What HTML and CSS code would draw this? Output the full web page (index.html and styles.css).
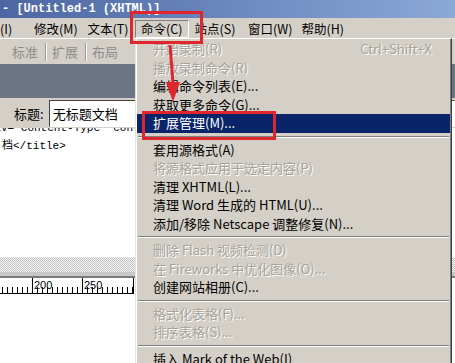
FILE: index.html
```html
<!DOCTYPE html>
<html lang="zh-CN">
<head>
  <meta charset="UTF-8" />
  <title>命令菜单</title>
  <link rel="stylesheet" href="styles.css">
</head>
<body>

  <div class="titlebar">- [Untitled-1 (XHTML)]</div>

  <div class="menubar">
    <span class="mitem first">(I)</span>
    <span class="mitem">修改(M)</span>
    <span class="mitem">文本(T)</span>
    <span class="mitem open">命令(C)</span>
    <span class="mitem">站点(S)</span>
    <span class="mitem">窗口(W)</span>
    <span class="mitem">帮助(H)</span>
  </div>

  <div class="toolbar">
    <span class="tab">标准</span>
    <span class="sep"></span>
    <span class="tab">扩展</span>
    <span class="sep"></span>
    <span class="tab">布局</span>
  </div>

  <div class="darkband"></div>

  <div class="docbar">
    <label for="docTitle">标题:</label>
    <div class="titleinput" id="docTitle">无标题文档</div>
  </div>

  <div class="code">
    <div class="code-lines">
      <div class="line l1">&lt;meta http-equiv="Content-Type" content="text/html; charset=utf-8" /&gt;</div>
      <div class="line">档&lt;/title&gt;</div>
    </div>
  </div>

  <div class="stipple"></div>
  <div class="rulerline"></div>
  <div class="ruler">
    <span class="rcell">200</span>
    <span class="rcell">250</span>
  </div>

  <!-- Commands dropdown, open over the document -->
  <div class="dropdown">
    <div class="item off"><span>开始录制(R)</span><span>Ctrl+Shift+X</span></div>
    <div class="item off">播放录制命令(R)</div>
    <div class="item">编辑命令列表(E)...</div>
    <div class="item">获取更多命令(G)...</div>
    <div class="item active">扩展管理(M)...</div>
    <div class="sep-line"></div>
    <div class="item">套用源格式(A)</div>
    <div class="item off">将源格式应用于选定内容(P)</div>
    <div class="item">清理 XHTML(L)...</div>
    <div class="item">清理 Word 生成的 HTML(U)...</div>
    <div class="item">添加/移除 Netscape 调整修复(N)...</div>
    <div class="sep-line"></div>
    <div class="item off">删除 Flash 视频检测(D)</div>
    <div class="item off">在 Fireworks 中优化图像(O)...</div>
    <div class="item">创建网站相册(C)...</div>
    <div class="sep-line"></div>
    <div class="item off">格式化表格(F)...</div>
    <div class="item off">排序表格(S)...</div>
    <div class="sep-line"></div>
    <div class="item">插入 Mark of the Web(I)</div>
  </div>

  <!-- Red annotation marks -->
  <div class="mark-box box1"></div>
  <div class="mark-box box2"></div>
  <svg class="arrow" width="30" height="66" viewBox="0 0 30 66">
    <line x1="10" y1="5" x2="13" y2="44" stroke="#e1252d" stroke-width="3" />
    <polygon points="6,42 20,42 13,62" fill="#e1252d" />
  </svg>

</body>
</html>
```

FILE: styles.css
```css
body {
  margin: 0;
  width: 455px;
  height: 363px;
  overflow: hidden;
  position: relative;
  background: #fff;
  font-family: "Noto Sans CJK SC", sans-serif;
  font-size: 13px;
  color: #000;
}

.titlebar {
  height: 18px;
  padding-left: 2px;
  background: linear-gradient(to right, #4c66a2, #8ca8d8);
  color: #fff;
  font: bold 12px/18px "Liberation Mono", monospace;
  white-space: nowrap;
}

/* Menu bar */
.menubar {
  height: 20px;
  display: flex;
  align-items: flex-end;
  background: #d4d0c8;
  font-size: 12.5px;
  white-space: nowrap;
}
.mitem {
  box-sizing: border-box;
  flex: none;
  width: 53.5px;
  height: 18px;
  padding-left: 5px;
  line-height: 16px;
  border: 1px solid transparent;
}
.mitem.first { width: 28px; padding-left: 0; border-left: 0; }
.mitem.open { border-color: #808080 #fff #fff #808080; }

.toolbar {
  box-sizing: border-box;
  height: 26px;
  display: flex;
  align-items: center;
  padding-left: 12px;
  border-top: 1px solid #fff;
  background: #d4d0c8;
  color: #8c8c8c;
}
.toolbar .sep {
  width: 1px;
  height: 18px;
  margin: 0 5px 0 7px;
  background: #9a9a9a;
  border-right: 1px solid #fff;
}

.darkband { height: 34px; background: #6c7486; }

.docbar {
  height: 30px;
  display: flex;
  align-items: center;
  padding-left: 14px;
  background: #d4d0c8;
}
.docbar label { margin-right: 5px; }
.titleinput {
  box-sizing: border-box;
  flex: 1;
  height: 27px;
  padding-left: 3px;
  line-height: 25px;
  background: #fff;
  border: 1px solid;
  border-color: #404040 #fff #fff #404040;
}

/* Code view */
.code {
  height: 129px;
  padding-left: 2px;
  overflow: hidden;
  background: #fff;
  font: 11px/18px "Liberation Mono", "Noto Sans CJK SC", monospace;
}
.code-lines { margin-top: -9px; }
.line { white-space: nowrap; }
.l1 { text-indent: -100px; }

.stipple {
  height: 15px;
  background: repeating-conic-gradient(#c4c4c4 0 25%, #f4f4f4 0 50%) 0 0 / 2px 2px;
}
.rulerline {
  height: 4px;
  background: #c8c8c8;
  border-bottom: 2px solid #7a7a7a;
}
.ruler {
  box-sizing: border-box;
  width: 134px;
  height: 16px;
  display: flex;
  padding-left: 32px;
  border-bottom: 1px solid #000;
  border-right: 1px solid #000;
  background: repeating-linear-gradient(to right, #000 0 1px, transparent 1px 5px) 2px 100% / 100% 6px no-repeat;
}
.rcell {
  flex: none;
  width: 50px;
  box-sizing: border-box;
  padding: 2px 0 0 1px;
  border-left: 1px solid #000;
  font: 11px/11px "Liberation Sans", sans-serif;
}

/* Dropdown menu */
.dropdown {
  position: absolute;
  left: 135px;
  top: 38px;
  bottom: -10px;
  width: 317px;
  box-sizing: border-box;
  padding: 1px 1px 0 1px;
  background: #d4d0c8;
  border-left: 1px solid #e6e3de;
  border-top: 1px solid #fff;
  border-right: 1px solid #404040;
  box-shadow: inset 1px 0 #fff, inset -1px 0 #808080;
}
.item {
  height: 18.5px;
  line-height: 18.5px;
  padding: 0 18px 0 16px;
  display: flex;
  justify-content: space-between;
  white-space: nowrap;
}
.item.off { color: #a6a29a; text-shadow: 1px 1px 0 #fff; }
.item.active { background: #0a246a; color: #fff; }
.sep-line {
  margin: 3px 1px;
  border-top: 1px solid #808080;
  border-bottom: 1px solid #fff;
}

/* Annotations */
.mark-box {
  position: absolute;
  box-sizing: border-box;
  border: 3px solid #e1252d;
}
.box1 { left: 130px; top: 11px; width: 73px; height: 33px; }
.box2 { left: 142px; top: 111px; width: 134px; height: 29px; }
.arrow { position: absolute; left: 160px; top: 40px; }
```
